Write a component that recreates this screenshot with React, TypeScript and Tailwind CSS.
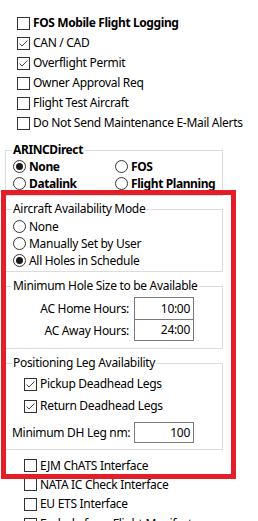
const font = { fontFamily: '"Noto Sans", "Liberation Sans", sans-serif' };

function Check({ checked }: { checked?: boolean }) {
  return (
    <span className="w-[13px] h-[13px] shrink-0 border border-[#333333] bg-white flex items-center justify-center">
      {checked && (
        <svg width="11" height="11" viewBox="0 0 11 11">
          <polyline points="1.5,5.5 4,8 9.5,2.5" fill="none" stroke="#444444" strokeWidth="1" />
        </svg>
      )}
    </span>
  );
}

function Radio({ checked }: { checked?: boolean }) {
  return (
    <span className="w-[13px] h-[13px] shrink-0 rounded-full border border-[#333333] bg-white flex items-center justify-center">
      {checked && <span className="w-[7px] h-[7px] rounded-full bg-[#1a1a1a]" />}
    </span>
  );
}

function CheckRow({ label, checked, bold, h = "h-[20px]" }: { label: string; checked?: boolean; bold?: boolean; h?: string }) {
  return (
    <div className={`${h} flex items-center gap-[3px] whitespace-nowrap`}>
      <Check checked={checked} />
      <span className={bold ? "font-bold tracking-[-0.4px]" : ""}>{label}</span>
    </div>
  );
}

function RadioRow({ label, checked, bold }: { label: string; checked?: boolean; bold?: boolean }) {
  return (
    <div className="h-[17px] flex items-center gap-[3px] whitespace-nowrap">
      <Radio checked={checked} />
      <span className={bold ? "font-bold tracking-[-0.4px]" : ""}>{label}</span>
    </div>
  );
}

function Group({ title, bold, children, className }: { title: string; bold?: boolean; children: React.ReactNode; className?: string }) {
  return (
    <fieldset className={`ml-[5px] w-[218px] border border-[#dcdcdc] ${className ?? ""}`}>
      <legend className={`ml-[6px] px-[1px] leading-[16px] ${bold ? "font-bold tracking-[-0.4px]" : ""}`}>{title}</legend>
      {children}
    </fieldset>
  );
}

export default function App() {
  return (
    <div className="relative w-[258px] h-[521px] overflow-hidden bg-white text-[12px] tracking-[-0.3px] text-black" style={font}>
      {/* Top checkboxes */}
      <div className="pt-[13px] pl-[17px]">
        <CheckRow label="FOS Mobile Flight Logging" bold />
        <CheckRow label="CAN / CAD" checked />
        <CheckRow label="Overflight Permit" checked />
        <CheckRow label="Owner Approval Req" />
        <CheckRow label="Flight Test Aircraft" />
        <CheckRow label="Do Not Send Maintenance E-Mail Alerts" />
      </div>

      {/* ARINCDirect */}
      <Group title="ARINCDirect" bold className="mt-[9px] pb-[3px]">
        <div className="grid grid-cols-[102px_1fr] pl-[7px]">
          <RadioRow label="None" checked bold />
          <RadioRow label="FOS" bold />
          <RadioRow label="Datalink" bold />
          <RadioRow label="Flight Planning" bold />
        </div>
      </Group>

      {/* Aircraft Availability Mode */}
      <Group title="Aircraft Availability Mode" className="mt-[5px] pb-[2px]">
        <div className="pl-[7px] pt-[1px]">
          <RadioRow label="None" />
          <RadioRow label="Manually Set by User" />
          <RadioRow label="All Holes in Schedule" checked />
        </div>
      </Group>

      {/* Minimum Hole Size */}
      <Group title="Minimum Hole Size to be Available" className="mt-[6px] pb-[7px]">
        <div className="flex mt-[3px]">
          <div className="w-[123px] flex flex-col items-end">
            <div className="h-[23px] flex items-center">AC Home Hours:</div>
            <div className="h-[21px] flex items-center">AC Away Hours:</div>
          </div>
          <div className="ml-[5px] w-[60px] border border-[#7a7a7a]">
            <div className="h-[21px] flex items-center justify-end pr-[3px]">10:00</div>
            <div className="h-[21px] border-t border-[#7a7a7a] flex items-center justify-end pr-[3px]">24:00</div>
          </div>
        </div>
      </Group>

      {/* Positioning Leg Availability */}
      <Group title="Positioning Leg Availability" className="mt-[6px] pb-[6px]">
        <div className="pl-[18px] pt-[2px]">
          <CheckRow label="Pickup Deadhead Legs" checked h="h-[22px]" />
          <CheckRow label="Return Deadhead Legs" checked h="h-[22px]" />
        </div>
        <div className="flex items-center mt-[5px]">
          <div className="w-[123px] pl-[6px] whitespace-nowrap">Minimum DH Leg nm:</div>
          <div className="ml-[5px] w-[60px] h-[21px] border border-[#7a7a7a] flex items-center justify-end pr-[3px]">100</div>
        </div>
      </Group>

      {/* Bottom checkboxes */}
      <div className="pl-[24px] pt-[6px]">
        <CheckRow label="EJM ChATS Interface" h="h-[19px]" />
        <CheckRow label="NATA IC Check Interface" h="h-[19px]" />
        <CheckRow label="EU ETS Interface" h="h-[20px]" />
        <CheckRow label="Exclude from Flight Manifest" h="h-[20px]" />
      </div>

      {/* Red annotation frame */}
      <div className="absolute left-[1px] top-[190px] w-[235px] h-[289px] border-[5px] border-[#e41e26]" />
    </div>
  );
}
